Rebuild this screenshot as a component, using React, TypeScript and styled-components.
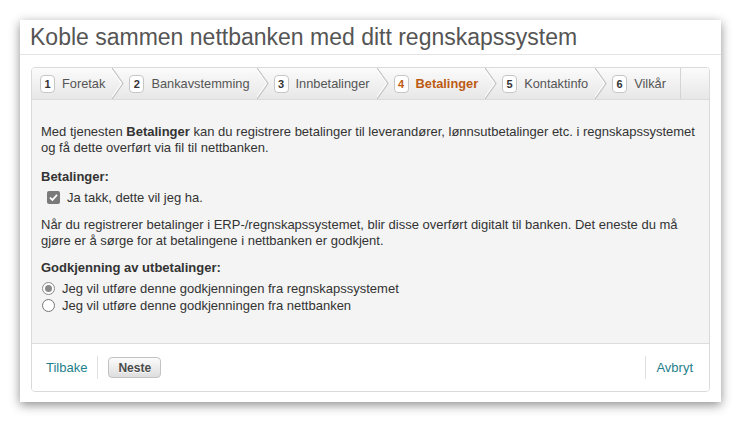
import styled, { createGlobalStyle } from "styled-components";

const GlobalStyle = createGlobalStyle`
  html, body {
    margin: 0;
    padding: 0;
    background: #ffffff;
  }
  body {
    font-family: "Liberation Sans", Arial, sans-serif;
    font-size: 13px;
    color: #333;
  }
`;

const Page = styled.div`
  padding: 20px;
`;

const Dialog = styled.div`
  width: 701px;
  box-sizing: border-box;
  background: #fff;
  padding: 0 11px 10px;
  box-shadow: 0 3px 10px rgba(0, 0, 0, 0.45);
`;

const Title = styled.h1`
  margin: 0 -11px;
  padding: 0 10px;
  height: 35px;
  line-height: 34px;
  font-size: 23px;
  font-weight: normal;
  color: #555;
  border-bottom: 1px solid #e4e4e4;
  box-sizing: border-box;
`;

const Panel = styled.div`
  margin-top: 12px;
  border: 1px solid #dadada;
  border-radius: 4px;
  overflow: hidden;
`;

const Steps = styled.ol`
  display: flex;
  margin: 0;
  padding: 0 0 0 3px;
  list-style: none;
  height: 31px;
  border-bottom: 1px solid #dcdcdc;
  background: linear-gradient(#fbfbfb, #e7e7e7);
`;

const Step = styled.li<{ $last?: boolean }>`
  position: relative;
  display: flex;
  align-items: center;
  gap: 7px;
  padding: 0 ${(p) => (p.$last ? "14px" : "19px")} 0 5px;
  border-right: ${(p) => (p.$last ? "1px solid #d4d4d4" : "none")};
`;

const Badge = styled.span<{ $active?: boolean }>`
  display: inline-flex;
  align-items: center;
  justify-content: center;
  width: 13px;
  height: 16px;
  border: 1px solid #c6c6c6;
  border-radius: 4px;
  background: #fff;
  font-size: 11px;
  font-weight: bold;
  color: ${(p) => (p.$active ? "#bd5a12" : "#333")};
`;

const StepLabel = styled.span<{ $active?: boolean }>`
  font-size: 12.8px;
  color: ${(p) => (p.$active ? "#bd5a12" : "#555")};
  font-weight: ${(p) => (p.$active ? "bold" : "normal")};
`;

const Chevron = styled.svg`
  position: absolute;
  right: 0;
  top: 0;
  width: 12px;
  height: 31px;
`;

const Body = styled.div`
  background: #f4f4f4;
  padding: 24px 9px 29px;
`;

const Text = styled.p<{ $gap?: number }>`
  margin: ${(p) => p.$gap ?? 0}px 0 0;
  line-height: 16px;
`;

const FieldLabel = styled.div<{ $gap: number }>`
  margin-top: ${(p) => p.$gap}px;
  line-height: 16px;
  font-weight: bold;
`;

const Options = styled.div`
  margin-top: 4px;
`;

const Option = styled.label<{ $indent?: number }>`
  display: flex;
  align-items: center;
  gap: 7px;
  height: 17px;
  padding-left: ${(p) => p.$indent ?? 0}px;
`;

const CheckBox = styled.span`
  display: inline-flex;
  align-items: center;
  justify-content: center;
  width: 13px;
  height: 13px;
  border-radius: 2px;
  background: #7a7a7a;
`;

const Radio = styled.span<{ $checked?: boolean }>`
  position: relative;
  width: 11px;
  height: 11px;
  border-radius: 50%;
  border: 1px solid ${(p) => (p.$checked ? "#8a8a8a" : "#767676")};
  background: #fff;

  &::after {
    content: "";
    display: ${(p) => (p.$checked ? "block" : "none")};
    position: absolute;
    left: 2px;
    top: 2px;
    width: 7px;
    height: 7px;
    border-radius: 50%;
    background: #8a8a8a;
  }
`;

const Footer = styled.div`
  display: flex;
  align-items: center;
  height: 47px;
  padding: 0 16px 0 14px;
  background: #fff;
  border-top: 1px solid #dcdcdc;
`;

const LinkText = styled.a`
  color: #1f7f8c;
  font-size: 13px;
  text-decoration: none;
`;

const Divider = styled.span`
  width: 1px;
  height: 23px;
  margin: 0 10px;
  background: #e0e0e0;
`;

const Spacer = styled.span`
  flex: 1;
`;

const Button = styled.button`
  height: 21px;
  padding: 0 9px;
  border: 1px solid #c2c2c2;
  border-radius: 4px;
  background: linear-gradient(#fbfbfb, #dedede);
  font-family: "Liberation Sans", Arial, sans-serif;
  font-size: 12px;
  font-weight: bold;
  color: #4a4a4a;
  text-shadow: 0 1px 0 #fff;
`;

const steps = [
  "Foretak",
  "Bankavstemming",
  "Innbetalinger",
  "Betalinger",
  "Kontaktinfo",
  "Vilkår",
];

export default function App() {
  return (
    <Page>
      <GlobalStyle />
      <Dialog>
        <Title>Koble sammen nettbanken med ditt regnskapssystem</Title>
        <Panel>
          <Steps>
            {steps.map((label, i) => {
              const last = i === steps.length - 1;
              const active = i === 3;
              return (
                <Step key={label} $last={last}>
                  <Badge $active={active}>{i + 1}</Badge>
                  <StepLabel $active={active}>{label}</StepLabel>
                  {!last && (
                    <Chevron viewBox="0 0 12 31">
                      <polyline points="0,0 11,15.5 0,31" fill="none" stroke="#c4c4c4" strokeWidth="1.2" />
                      <polyline points="-1.5,0 9.5,15.5 -1.5,31" fill="none" stroke="#ffffff" strokeWidth="1" />
                    </Chevron>
                  )}
                </Step>
              );
            })}
          </Steps>
          <Body>
            <Text>
              Med tjenesten <b>Betalinger</b> kan du registrere betalinger til leverandører,
              lønnsutbetalinger etc. i regnskapssystemet og få dette overført via fil til
              nettbanken.
            </Text>
            <FieldLabel $gap={13}>Betalinger:</FieldLabel>
            <Options>
              <Option $indent={6}>
                <CheckBox>
                  <svg width="9" height="9" viewBox="0 0 9 9">
                    <polyline points="1,4.6 3.4,7 8,1.8" fill="none" stroke="#fff" strokeWidth="1.8" />
                  </svg>
                </CheckBox>
                Ja takk, dette vil jeg ha.
              </Option>
            </Options>
            <Text $gap={11}>
              Når du registrerer betalinger i ERP-/regnskapssystemet, blir disse overført
              digitalt til banken. Det eneste du må gjøre er å sørge for at betalingene i
              nettbanken er godkjent.
            </Text>
            <FieldLabel $gap={11}>Godkjenning av utbetalinger:</FieldLabel>
            <Options>
              <Option $indent={1}>
                <Radio $checked />
                Jeg vil utføre denne godkjenningen fra regnskapssystemet
              </Option>
              <Option $indent={1}>
                <Radio />
                Jeg vil utføre denne godkjenningen fra nettbanken
              </Option>
            </Options>
          </Body>
          <Footer>
            <LinkText href="#">Tilbake</LinkText>
            <Divider />
            <Button>Neste</Button>
            <Spacer />
            <Divider />
            <LinkText href="#">Avbryt</LinkText>
          </Footer>
        </Panel>
      </Dialog>
    </Page>
  );
}
